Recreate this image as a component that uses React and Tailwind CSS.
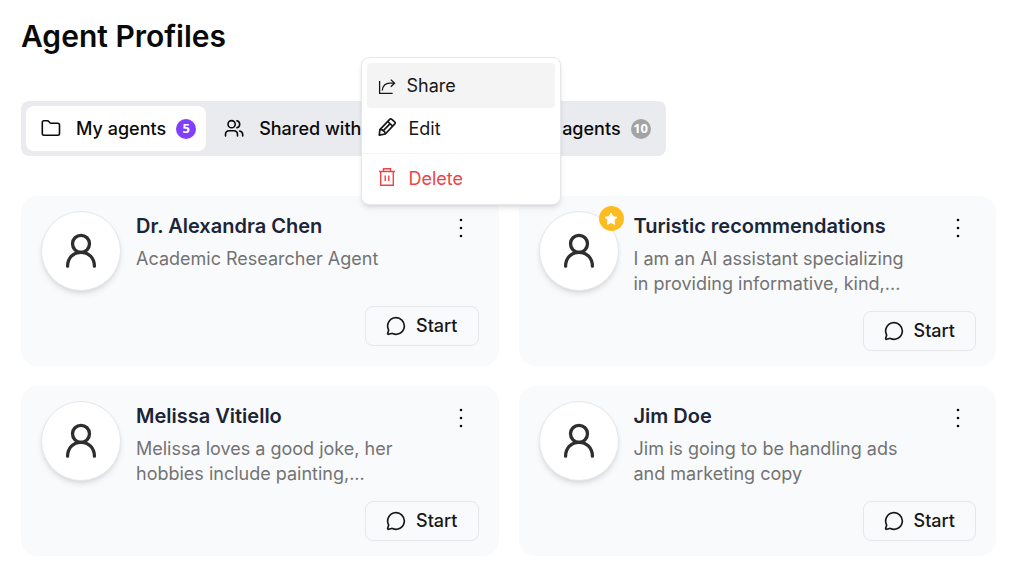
import React, { useState } from "react";
import { MessageCircle } from "lucide-react";

const agents = [
  {
    id: 1,
    name: "Dr. Alexandra Chen",
    description: "Academic Researcher Agent",
  },
  {
    id: 2,
    name: "Turistic recommendations",
    description:
      "I am an AI assistant specializing in providing informative, kind,...",
    featured: true,
  },
  {
    id: 3,
    name: "Melissa Vitiello",
    description: "Melissa loves a good joke, her hobbies include painting,...",
  },
  {
    id: 4,
    name: "Jim Doe",
    description: "Jim is going to be handling ads and marketing copy",
  },
];

const FolderIcon = () => (
  <svg className="size-5" viewBox="0 0 20 20" fill="none" stroke="currentColor" strokeWidth="1.6" strokeLinejoin="round">
    <path d="M1.3 3.4c0-1 .6-1.600 1.600-1.600h3.500c.6 0 1 .2 1.400.7l1.100 1.300c.3.4.7.5 1.200.5h6.700c1 0 1.700.7 1.700 1.700v8.700c0 1-.7 1.600-1.700 1.600H3c-1.100 0-1.700-.6-1.700-1.600z" />
  </svg>
);

const UsersIcon = () => (
  <svg className="size-5" viewBox="0 0 20 20" fill="none" stroke="currentColor" strokeWidth="1.6" strokeLinecap="round">
    <circle cx="7.600" cy="5.200" r="3.600" />
    <path d="M1.500 17v-1.500c0-2.200 1.700-3.700 3.700-3.700h4.600c2.100 0 3.700 1.600 3.700 3.700v1.500" />
    <path d="M12.900 1.700c1.700.4 2.800 1.800 2.800 3.500s-1.100 3-2.800 3.500" />
    <path d="M15.700 12c1.900.4 3 1.800 3 3.500v1.500" />
  </svg>
);

const ShareIcon = () => (
  <svg className="size-5" viewBox="0 0 20 20" fill="none" stroke="currentColor" strokeWidth="1.300">
    <path d="M2.600 5v12.400h13" />
    <path d="M5.300 14.500c.5-4.600 3.200-7.300 7.500-7.300h4.600" />
    <path d="M13.800 3.600l3.700 3.600-3.700 3.600" />
  </svg>
);

const PencilIcon = () => (
  <svg className="mb-1 size-5" viewBox="0 0 20 20" fill="none" stroke="currentColor" strokeWidth="1.700" strokeLinejoin="round">
    <path d="M2.300 18.200l.6-5.600L12.700 2.400c.7-.7 1.400-.7 2.100-.1l2.900 2.600c.7.600.7 1.300.1 2L8.300 17z" />
    <path d="M2.900 12.600c3-.2 5.200 1.700 5.400 4.400M10.700 4.500l4.900 4.600M5.600 14.300l8-8.200" />
  </svg>
);

const TrashIcon = () => (
  <svg className="mb-1 size-5" viewBox="0 0 20 20" fill="none" stroke="currentColor" strokeWidth="1.400">
    <path d="M2 4.500h16M3.700 4.500v13.800h12.600V4.500M6.500 4.500V1.700h7v2.800M8.200 8.500v5.500M11.800 8.500v5.500" />
  </svg>
);

const PersonIcon = () => (
  <svg className="size-10" viewBox="0 0 40 40" fill="none" stroke="currentColor" strokeWidth="3.300" strokeLinecap="round">
    <circle cx="20" cy="12.800" r="8.500" />
    <path d="M6.600 35.200C6.600 27 12.300 21.300 20 21.300S33.400 27 33.400 35.200" />
  </svg>
);

const StarIcon = () => (
  <svg className="size-4" viewBox="0 0 16 16" fill="currentColor" stroke="currentColor" strokeLinejoin="round">
    <path d="M8 2l1.900 3.700 4.100.6-3 2.900.7 4.200L8 11.500l-3.700 1.900.7-4.200-3-2.900 4.100-.6z" />
  </svg>
);

const DotsIcon = () => (
  <svg className="size-6" viewBox="0 0 24 24" fill="currentColor">
    <circle cx="12" cy="4" r="1.300" />
    <circle cx="12" cy="12" r="1.300" />
    <circle cx="12" cy="20" r="1.300" />
  </svg>
);

function Tab({ icon, label, count, active, onClick }) {
  return (
    <button
      type="button"
      role="tab"
      aria-selected={active}
      onClick={onClick}
      className={`flex h-[45px] items-center rounded-lg pl-[15px] pr-2.5 text-lg font-medium whitespace-nowrap ${
        active ? "bg-white" : ""
      }`}
    >
      {icon}
      <span className="ml-[15px]">{label}</span>
      <span
        className={`ml-2.5 flex size-5 items-center justify-center rounded-full font-['Open_Sans',sans-serif] text-[13px] font-bold text-white ${
          active ? "bg-[#7f3ffc]" : "bg-[#a3a3a3]"
        }`}
      >
        {count}
      </span>
    </button>
  );
}

function AgentMenu() {
  return (
    <div
      role="menu"
      className="absolute bottom-full left-1/2 z-10 mb-1.5 w-[200px] -translate-x-1/2 rounded-lg border border-gray-200 bg-white px-[5px] pt-[5px] pb-1 text-lg text-[#171717] shadow-md"
    >
      <button type="button" role="menuitem" className="flex h-[45px] w-full items-center gap-2.5 rounded-sm bg-[#f4f4f4] px-2.5">
        <ShareIcon />
        Share
      </button>
      <button type="button" role="menuitem" className="flex h-[42px] w-full items-center gap-3 px-2.5">
        <PencilIcon />
        Edit
      </button>
      <hr className="-mx-[5px] mt-[3px] mb-1 border-gray-100" />
      <button type="button" role="menuitem" className="flex h-[42px] w-full items-center gap-3 px-2.5 text-[#ef4444]">
        <TrashIcon />
        Delete
      </button>
    </div>
  );
}

function AgentCard({ agent, menuOpen, onToggleMenu }) {
  return (
    <article className="rounded-2xl bg-[#f9fafc] px-5 py-[15px]">
      <div className="flex min-h-20 items-start gap-[15px]">
        <div className="relative flex size-20 shrink-0 items-center justify-center rounded-full border border-gray-200 bg-white text-[#2e2e2e] shadow-md">
          <PersonIcon />
          {agent.featured && (
            <span className="absolute -top-1.5 -right-1.5 flex size-[25px] items-center justify-center rounded-full bg-[#fdbc22] text-white">
              <StarIcon />
            </span>
          )}
        </div>

        <div className="min-w-0 flex-1 pr-2.5">
          <h2 className="text-xl leading-[30px] font-semibold text-[#1c2536]">
            {agent.name}
          </h2>
          <p className="mt-[5px] line-clamp-2 text-lg leading-[25px] text-[#737373]">
            {agent.description}
          </p>
        </div>

        <div className="relative shrink-0">
          <button
            type="button"
            aria-label={`Options for ${agent.name}`}
            aria-expanded={menuOpen}
            onClick={onToggleMenu}
            className="flex h-[34px] w-9 items-center justify-center"
          >
            <DotsIcon />
          </button>
          {menuOpen && <AgentMenu />}
        </div>
      </div>

      <div className="mt-[15px] flex justify-end">
        <button
          type="button"
          className="flex h-10 items-center gap-2.5 rounded-lg border border-gray-200 px-5 text-lg font-medium text-[#171717]"
        >
          <MessageCircle size={20} strokeWidth={2} />
          Start
        </button>
      </div>
    </article>
  );
}

export default function App() {
  const [tab, setTab] = useState("mine");
  const [openMenu, setOpenMenu] = useState(1);

  return (
    <main className="bg-white pt-4 pr-[17px] pb-5 pl-[21px] font-['Inter',sans-serif] text-[#0a0a0a]">
      <h1 className="text-3xl leading-10 font-semibold">Agent Profiles</h1>

      <div role="tablist" className="mt-[45px] flex w-fit gap-[3px] rounded-lg bg-[#eaebef] p-[5px]">
        <Tab icon={<FolderIcon />} label="My agents" count={5} active={tab === "mine"} onClick={() => setTab("mine")} />
        <Tab icon={<UsersIcon />} label="Shared with me" count={2} active={tab === "shared"} onClick={() => setTab("shared")} />
        <Tab icon={<UsersIcon />} label="Serenity agents" count={10} active={tab === "serenity"} onClick={() => setTab("serenity")} />
      </div>

      <div className="mt-10 grid grid-cols-2 gap-5">
        {agents.map((agent) => (
          <AgentCard
            key={agent.id}
            agent={agent}
            menuOpen={openMenu === agent.id}
            onToggleMenu={() => setOpenMenu(openMenu === agent.id ? null : agent.id)}
          />
        ))}
      </div>
    </main>
  );
}
